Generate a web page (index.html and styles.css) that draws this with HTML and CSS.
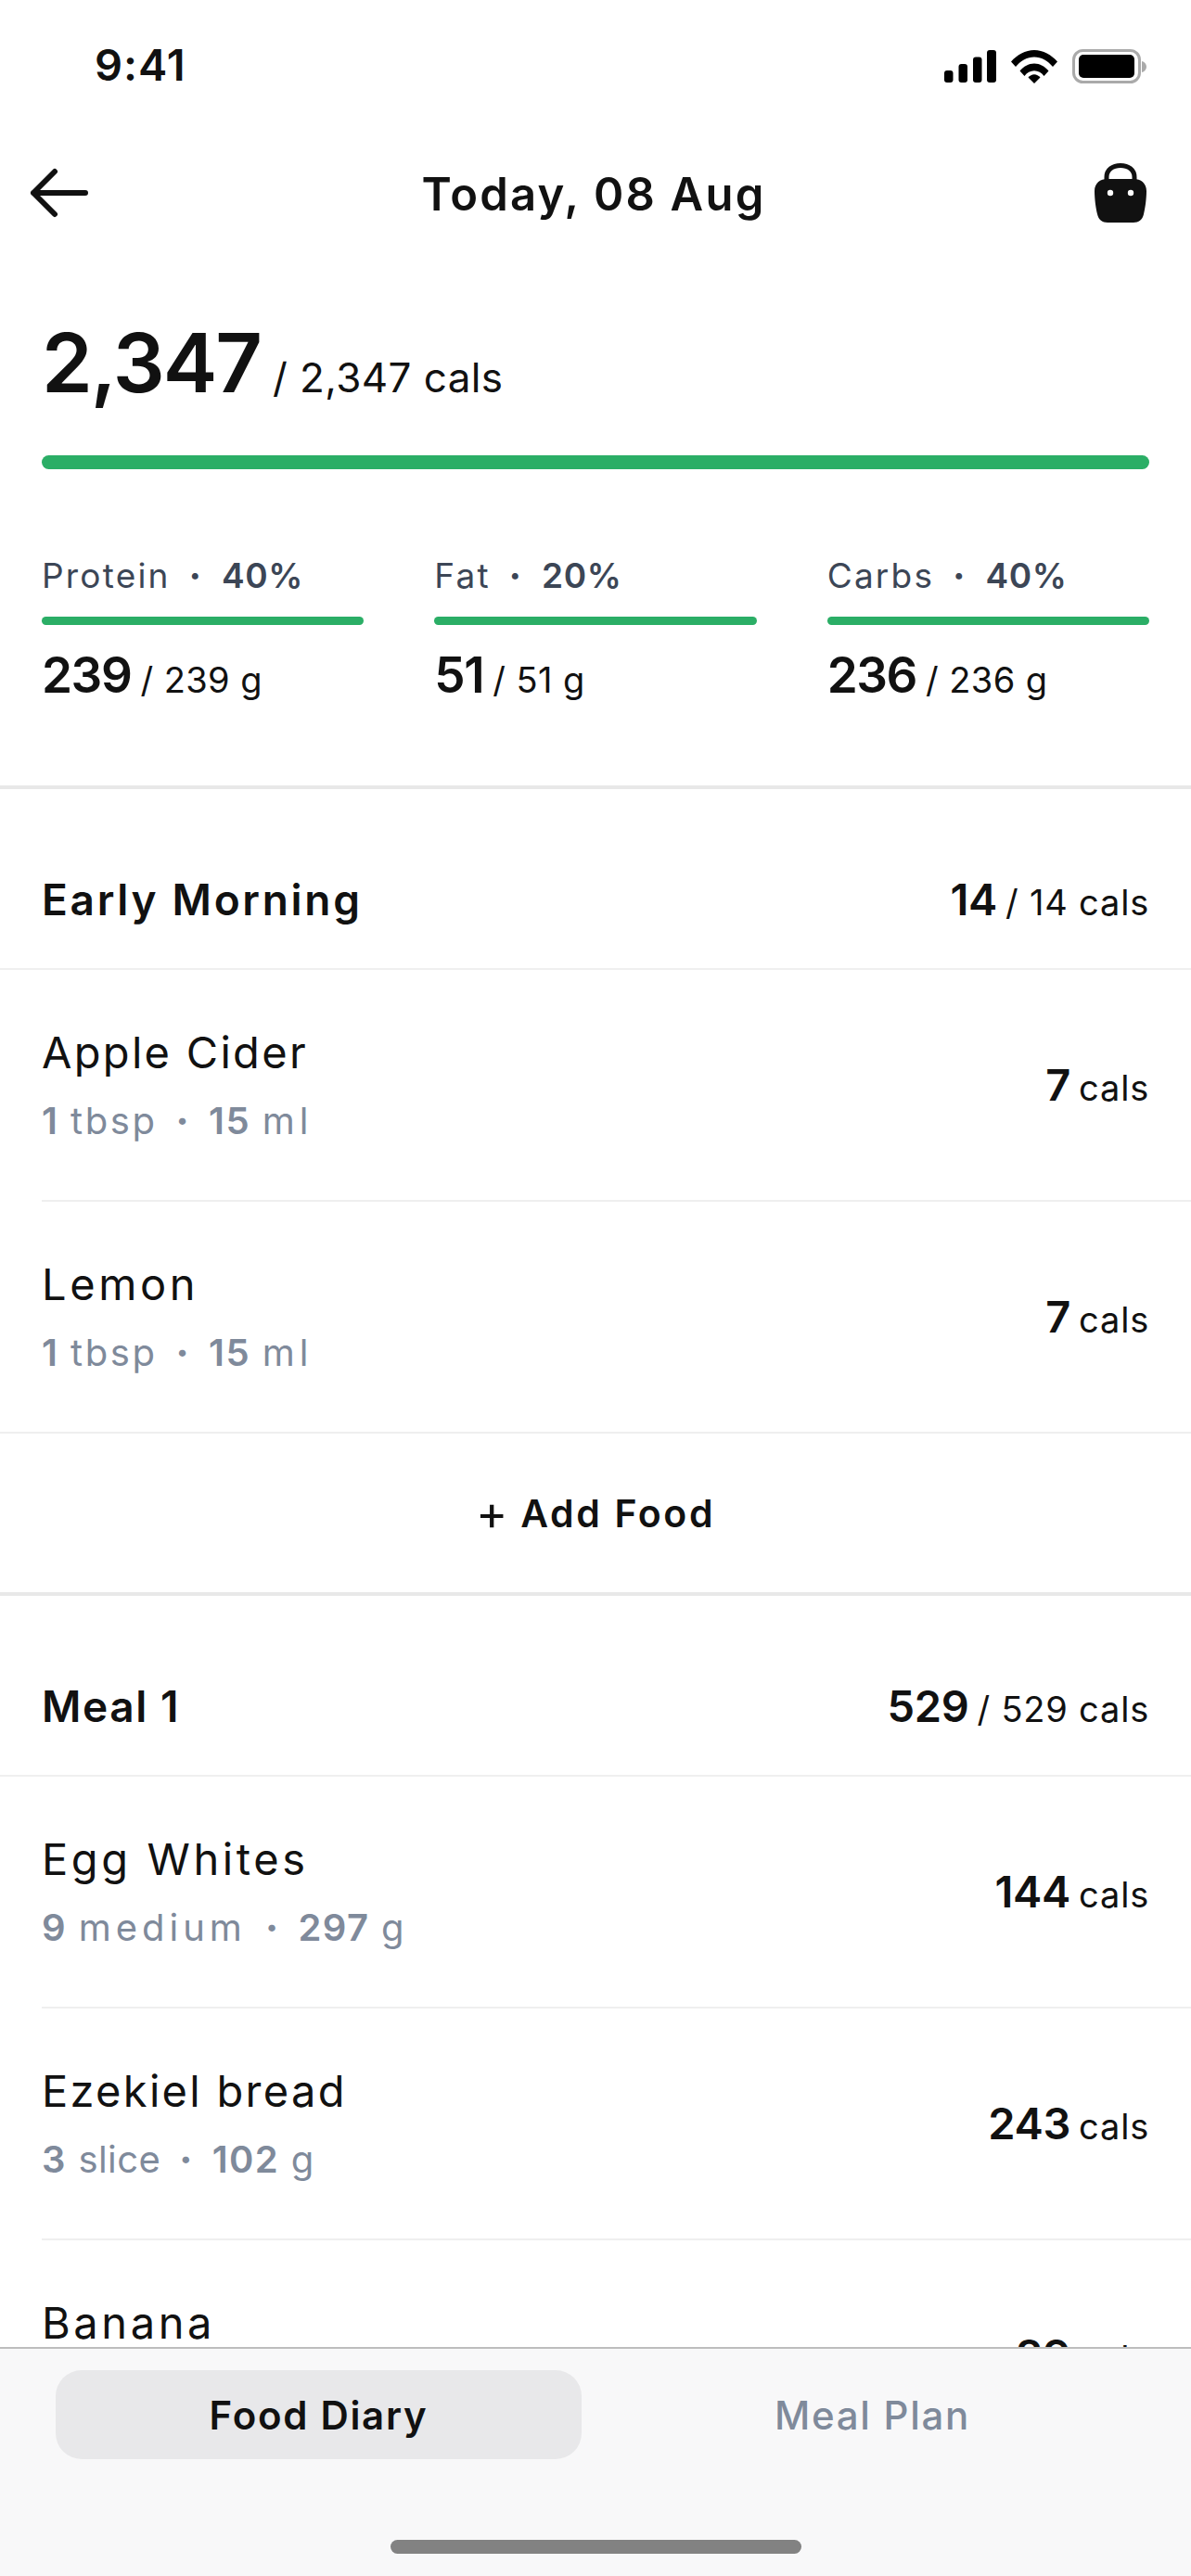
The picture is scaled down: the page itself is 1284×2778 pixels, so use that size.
FILE: index.html
```html
<!DOCTYPE html>
<html lang="en">
<head>
<meta charset="utf-8">
<title>Food Diary</title>
<link rel="stylesheet" href="styles.css">
</head>
<body>
<div class="app">
  <main class="content">
    <div class="status">
      <span class="time">9:41</span>
      <div class="status-icons">
        <svg class="sig" width="56" height="35" viewBox="0 0 56 35"><rect x="0" y="22" width="9.5" height="13" rx="3" /><rect x="15.5" y="15" width="9.5" height="20" rx="3"/><rect x="31" y="7.5" width="9.5" height="27.5" rx="3"/><rect x="46" y="0" width="10" height="35" rx="3"/></svg>
        <svg class="wifi" width="50" height="36" viewBox="0 0 50 36"><path d="M0 12.500C6.500 5 15.500 0 25 0s18.500 5 25 12.500l-5 5.500C39.500 11.500 32.500 7.500 25 7.500S10.500 11.500 5 18z"/><path d="M9.500 22.500C13.500 17.500 19 14.500 25 14.500s11.500 3 15.500 8l-5 5.500C33 24.500 29 22.300 25 22.300s-8 2.200-10.500 5.700z"/><path d="M18.500 29.500c1.600-2 4-3.300 6.500-3.300s4.900 1.300 6.500 3.300L25 36z"/></svg>
        <svg class="batt" width="81" height="38" viewBox="0 0 81 38"><rect x="1.500" y="1.500" width="71" height="34" rx="10" fill="none" stroke="#aaaaaa" stroke-width="3"/><rect x="7" y="6" width="60" height="25" rx="5" fill="#000"/><path d="M75 13c3 .8 5 3 5 6s-2 5.200-5 6z" fill="#aaaaaa"/></svg>
      </div>
    </div>
    <header class="topbar">
      <svg class="back" width="66" height="54" viewBox="0 0 66 54"><path d="M27 4 4 27l23 23M4 27h56" fill="none" stroke="#111" stroke-width="6" stroke-linecap="round" stroke-linejoin="round"/></svg>
      <h1 class="title">Today, 08 Aug</h1>
      <svg class="bag" width="56" height="64" viewBox="0 0 56 64"><path d="M13 20v-5C13 7 19.500 2.500 28 2.500S43 7 43 15v5" fill="none" stroke="#111" stroke-width="5"/><path d="M14 17h28c8 0 14 4.500 14 13 0 9-1.500 19-3 25-1.300 6-5.500 9-11 9H14c-5.500 0-9.700-3-11-9C1.500 49 0 39 0 30c0-8.500 6-13 14-13z" fill="#111"/><circle cx="17" cy="32" r="3.200" fill="#fff"/><circle cx="39" cy="32" r="3.200" fill="#fff"/></svg>
    </header>

    <section class="summary">
      <div class="total"><span class="total-num">2,347</span><span class="total-of">/ 2,347 cals</span></div>
      <div class="bar"></div>
      <div class="macros">
        <div class="macro">
          <div class="macro-label">Protein<span class="dot">·</span><b>40%</b></div>
          <div class="macro-bar"></div>
          <div class="macro-val"><span class="macro-num">239</span><span class="macro-of">/ 239 g</span></div>
        </div>
        <div class="macro">
          <div class="macro-label">Fat<span class="dot">·</span><b>20%</b></div>
          <div class="macro-bar"></div>
          <div class="macro-val"><span class="macro-num">51</span><span class="macro-of">/ 51 g</span></div>
        </div>
        <div class="macro">
          <div class="macro-label">Carbs<span class="dot">·</span><b>40%</b></div>
          <div class="macro-bar"></div>
          <div class="macro-val"><span class="macro-num">236</span><span class="macro-of">/ 236 g</span></div>
        </div>
      </div>
    </section>

    <section class="meal">
      <div class="meal-head">
        <h2 class="meal-name">Early Morning</h2>
        <div class="cals"><b>14</b><span class="unit">/ 14 cals</span></div>
      </div>
      <div class="food">
        <div><div class="food-name">Apple Cider</div><div class="food-sub"><b>1</b> <span class="mid">tbsp</span><span class="dot">·</span><b>15</b> <span class="wide">ml</span></div></div>
        <div class="cals"><b>7</b><span class="unit">cals</span></div>
      </div>
      <div class="food food-last">
        <div><div class="food-name name-wide">Lemon</div><div class="food-sub"><b>1</b> <span class="mid">tbsp</span><span class="dot">·</span><b>15</b> <span class="wide">ml</span></div></div>
        <div class="cals"><b>7</b><span class="unit">cals</span></div>
      </div>
      <div class="add"><span class="plus">+</span>Add Food</div>
    </section>

    <section class="meal">
      <div class="meal-head">
        <h2 class="meal-name name-short">Meal 1</h2>
        <div class="cals"><b>529</b><span class="unit">/ 529 cals</span></div>
      </div>
      <div class="food">
        <div><div class="food-name name-wide">Egg Whites</div><div class="food-sub"><b>9</b> <span class="wide">medium</span><span class="dot">·</span><b>297</b> g</div></div>
        <div class="cals"><b>144</b><span class="unit">cals</span></div>
      </div>
      <div class="food">
        <div><div class="food-name">Ezekiel bread</div><div class="food-sub"><b>3</b> <span class="tight">slice</span><span class="dot">·</span><b>102</b> g</div></div>
        <div class="cals"><b>243</b><span class="unit">cals</span></div>
      </div>
      <div class="food">
        <div class="food-clipped"><div class="food-name name-wide">Banana</div></div>
        <div class="cals"><b>89</b><span class="unit">cals</span></div>
      </div>
    </section>
  </main>

  <nav class="tabbar">
    <div class="tabs">
      <div class="tab tab-active">Food Diary</div>
      <div class="tab">Meal Plan</div>
    </div>
    <div class="home"></div>
  </nav>
</div>
</body>
</html>
```

FILE: styles.css
```css
* { box-sizing: border-box; }
html, body { margin: 0; padding: 0; background: #fff; }
body { font-family: Inter, "Open Sans", sans-serif; color: #111; }
.app { width: 1284px; height: 2778px; display: flex; flex-direction: column; overflow: hidden; }
.content { flex: 1; min-height: 0; overflow: hidden; }

.status { height: 140px; padding: 0 47px 0 102px; display: flex; align-items: center; justify-content: space-between; }
.time { font-size: 47px; font-weight: 600; line-height: 56px; color: #111; letter-spacing: 1px; }
.status-icons { display: flex; align-items: center; gap: 16px; margin-top: 3px; }
.sig, .wifi { fill: #000; }

.topbar { height: 136px; padding: 0 36px 0 32px; display: grid; grid-template-columns: 1fr auto 1fr; align-items: center; }
.back { justify-self: start; }
.bag { justify-self: end; margin-right: 12px; }
.title { margin: 4px 0 0; font-size: 49px; line-height: 56px; font-weight: 600; letter-spacing: 2.2px; }

.summary { padding: 67px 45px 92px; }
.total { display: flex; align-items: baseline; gap: 13px; line-height: 96px; height: 96px; }
.total-num { font-size: 88px; font-weight: 600; letter-spacing: -2px; }
.total-of { font-size: 44px; font-weight: 400; letter-spacing: 0.4px; }
.bar { height: 15px; margin-top: 52px; background: #2bae66; border-radius: 8px; }
.macros { display: grid; grid-template-columns: repeat(3, 1fr); gap: 76px; margin-top: 93px; }
.macro-label { font-size: 37px; line-height: 44px; color: #3c4656; font-weight: 400; letter-spacing: 2.2px; }
.macro-label b { font-weight: 600; letter-spacing: 0.6px; }
.dot { font-weight: 800; margin: 0 20px; }
.macro-bar { height: 9px; margin-top: 22px; background: #2bae66; border-radius: 5px; }
.macro-val { display: flex; align-items: baseline; gap: 10px; margin-top: 27px; line-height: 54px; height: 54px; }
.macro-num { font-size: 53px; font-weight: 600; letter-spacing: -1.4px; }
.macro-of { font-size: 38px; font-weight: 400; letter-spacing: 0.4px; }

.meal { border-top: 4px solid #e8e8e8; }
.meal-head { height: 195px; padding: 44px 45px 0; display: flex; align-items: center; justify-content: space-between; border-bottom: 2px solid #efefef; }
.meal-name { margin: 0; font-size: 46px; line-height: 56px; font-weight: 600; letter-spacing: 2.7px; }
.name-short { letter-spacing: 1.6px; }
.cals { display: flex; align-items: baseline; gap: 9px; }
.cals b { font-size: 47px; font-weight: 600; line-height: 56px; letter-spacing: -0.3px; }
.unit { font-size: 38px; letter-spacing: 0.8px; }

.food { height: 250px; margin-left: 45px; padding-right: 45px; display: flex; align-items: center; justify-content: space-between; border-bottom: 2px solid #efefef; }
.food-last { border-bottom: 0; height: 248px; }
.food-name { font-size: 47px; line-height: 56px; font-weight: 400; letter-spacing: 2.3px; }
.food-clipped { height: 127px; }
.name-wide { letter-spacing: 3.6px; }
.food-sub { margin-top: 21px; font-size: 40px; line-height: 50px; color: #7f8a9b; letter-spacing: 1.4px; }
.food-sub b { font-weight: 600; }
.mid { letter-spacing: 2.6px; }
.wide { letter-spacing: 5px; }
.tight { letter-spacing: 0.4px; }

.add { height: 173px; border-top: 2px solid #efefef; display: flex; align-items: center; justify-content: center; font-size: 41px; font-weight: 600; letter-spacing: 2.6px; }
.plus { font-size: 52px; font-weight: 400; margin-right: 14px; letter-spacing: 0; }

.tabbar { height: 247px; flex: none; border-top: 2px solid #bdbdbd; background: #f8f8f9; padding: 23px 60px 0; }
.tabs { display: grid; grid-template-columns: 1fr 1fr; gap: 30px; }
.tab { height: 96px; border-radius: 28px; display: flex; align-items: center; justify-content: center; font-size: 42px; font-weight: 500; color: #7f8a9b; letter-spacing: 1.7px; }
.tab-active { background: #e8e8ea; color: #111; font-weight: 600; }
.home { width: 443px; height: 15px; margin: 87px auto 0; background: #828282; border-radius: 8px; }
```
